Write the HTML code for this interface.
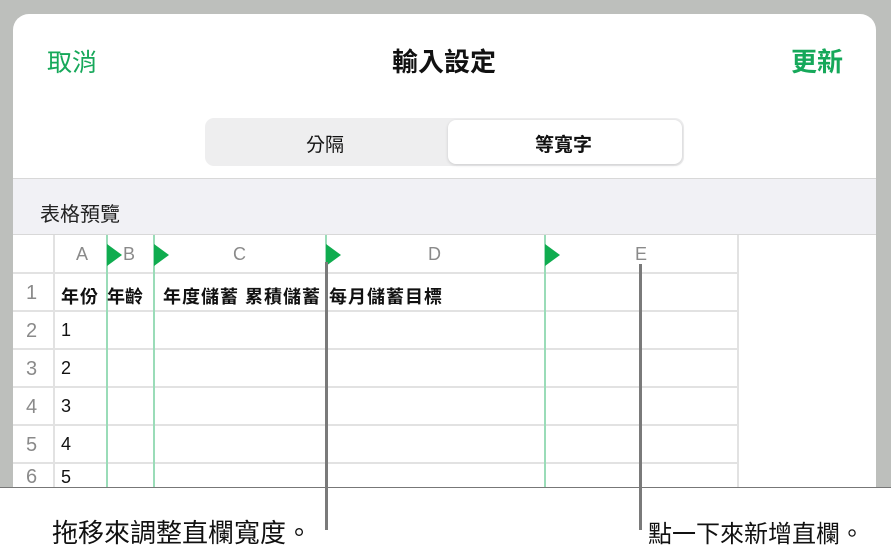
<!DOCTYPE html>
<html><head><meta charset="utf-8"><style>
*{margin:0;padding:0;box-sizing:border-box}
body{width:891px;height:551px;position:relative;background:#fff;overflow:hidden;font-family:"Liberation Sans","Noto Sans CJK TC",sans-serif}
.a{position:absolute}
.bg{left:0;top:0;width:891px;height:488px;background:#bdbfbc}
.sheet{left:13px;top:14px;width:863px;height:474px;background:#fff;border-radius:16px 16px 0 0;overflow:hidden}
.t{position:absolute;white-space:nowrap}
.hl{position:absolute;height:2px;background:#e2e2e2}
.vl{position:absolute;width:2px;background:#e2e2e2}
.g{position:absolute;width:2px;background:#9adcb8}
.tri{position:absolute;width:0;height:0;border-top:11px solid transparent;border-bottom:11px solid transparent;border-left:15px solid #0fac4f}
.col{position:absolute;top:244px;font-size:18px;color:#8a8a8a}
.rn{position:absolute;left:26px;font-size:20px;color:#8a8a8a}
.c{position:absolute;font-size:18px;color:#111;letter-spacing:1px}
</style></head><body>
<div class="a bg"></div>
<div class="a sheet"></div>
<div class="t" style="left:47px;top:43px;font-size:25px;color:#16a85a">取消</div>
<div class="t" style="left:392px;top:42px;font-size:26px;font-weight:bold;color:#111">輸入設定</div>
<div class="t" style="left:791px;top:42px;font-size:26px;font-weight:bold;color:#16a85a">更新</div>
<div class="a" style="left:205px;top:118px;width:479px;height:48px;background:#eeeeef;border-radius:9px"></div>
<div class="a" style="left:448px;top:120px;width:234px;height:44px;background:#fff;border-radius:8px;box-shadow:0 1px 3px rgba(0,0,0,.15)"></div>
<div class="t" style="left:306px;top:130px;font-size:19px;color:#111">分隔</div>
<div class="t" style="left:535px;top:130px;font-size:19px;font-weight:bold;color:#111">等寬字</div>
<div class="a" style="left:13px;top:178px;width:863px;height:57px;background:#f1f1f5;border-top:1px solid #d8d8d8;border-bottom:1px solid #d8d8d8"></div>
<div class="t" style="left:40px;top:198px;font-size:20px;color:#222">表格預覽</div>
<div class="vl" style="left:53px;top:235px;height:253px"></div>
<div class="vl" style="left:737px;top:235px;height:253px"></div>
<div class="hl" style="left:13px;top:272px;width:726px"></div>
<div class="hl" style="left:13px;top:310px;width:726px"></div>
<div class="hl" style="left:13px;top:348px;width:726px"></div>
<div class="hl" style="left:13px;top:386px;width:726px"></div>
<div class="hl" style="left:13px;top:424px;width:726px"></div>
<div class="hl" style="left:13px;top:462px;width:726px"></div>
<div class="g" style="left:106px;top:235px;height:253px"></div>
<div class="g" style="left:153px;top:235px;height:253px"></div>
<div class="g" style="left:544px;top:235px;height:253px"></div>
<div class="g" style="left:325px;top:235px;height:30px"></div>
<div class="tri" style="left:107px;top:244px"></div>
<div class="tri" style="left:154px;top:244px"></div>
<div class="tri" style="left:326px;top:244px"></div>
<div class="tri" style="left:545px;top:244px"></div>
<div class="col" style="left:76px">A</div>
<div class="col" style="left:123px">B</div>
<div class="col" style="left:233px">C</div>
<div class="col" style="left:428px">D</div>
<div class="col" style="left:635px">E</div>
<div class="rn" style="top:282px">1</div>
<div class="rn" style="top:320px">2</div>
<div class="rn" style="top:358px">3</div>
<div class="rn" style="top:396px">4</div>
<div class="rn" style="top:434px">5</div>
<div class="rn" style="top:466px">6</div>
<div class="c" style="left:61px;top:283px;font-weight:bold">年份</div>
<div class="c" style="left:107px;top:283px;font-weight:bold;letter-spacing:0">年齡</div>
<div class="c" style="left:163px;top:283px;font-weight:bold">年度儲蓄 累積儲蓄</div>
<div class="c" style="left:329px;top:283px;font-weight:bold">每月儲蓄目標</div>
<div class="c" style="left:61px;top:320px">1</div>
<div class="c" style="left:61px;top:358px">2</div>
<div class="c" style="left:61px;top:396px">3</div>
<div class="c" style="left:61px;top:434px">4</div>
<div class="c" style="left:61px;top:467px">5</div>
<div class="a" style="left:0;top:487px;width:891px;height:64px;background:#fff;border-top:1px solid #777"></div>
<div class="a" style="left:325px;top:262px;width:3px;height:268px;background:#7a7a7a"></div>
<div class="a" style="left:639px;top:264px;width:3px;height:266px;background:#7a7a7a"></div>
<div class="t" style="left:52px;top:513px;font-size:26px;color:#111">拖移來調整直欄寬度。</div>
<div class="t" style="left:648px;top:514px;font-size:24px;color:#111">點一下來新增直欄。</div>
</body></html>
